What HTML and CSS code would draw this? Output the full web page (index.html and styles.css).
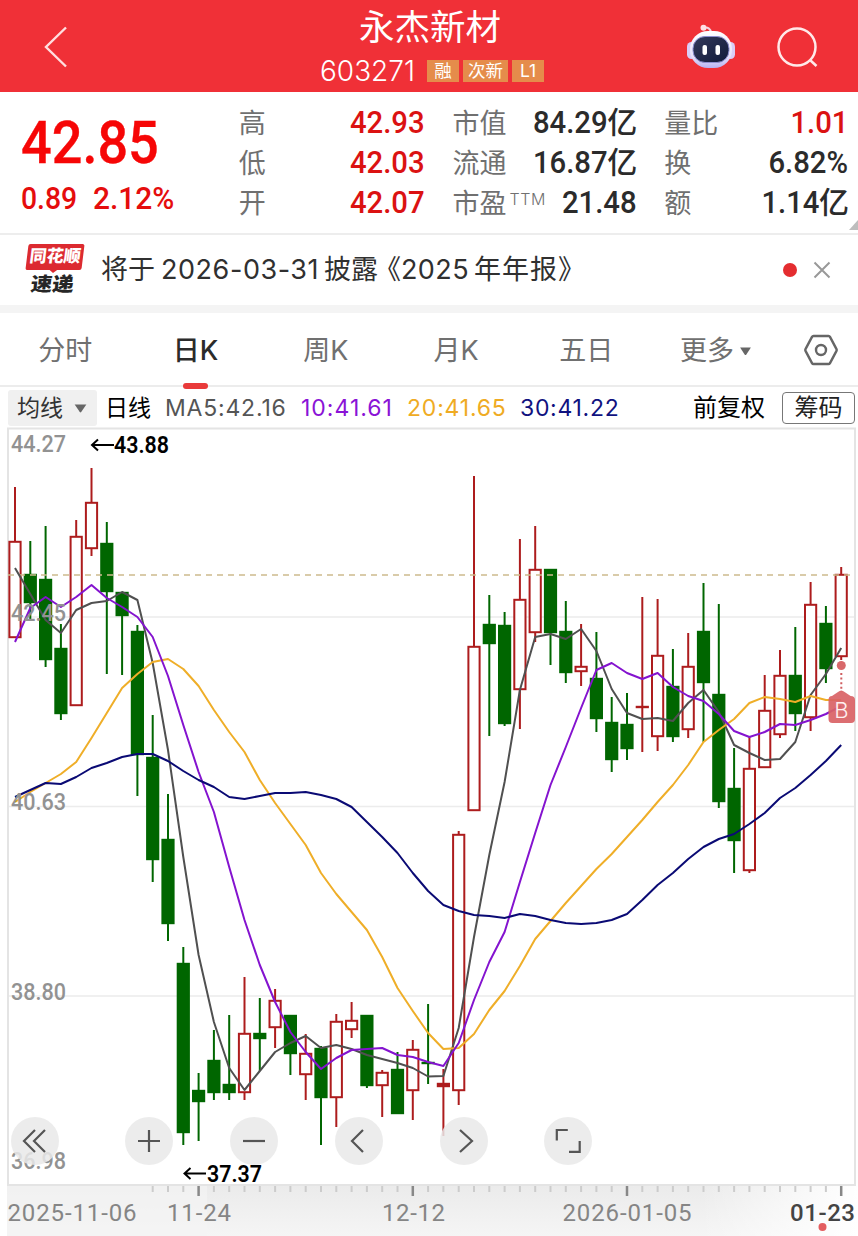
FILE: index.html
```html
<!DOCTYPE html>
<html lang="zh-CN">
<head>
<meta charset="utf-8">
<title>永杰新材 603271</title>
<link rel="stylesheet" href="styles.css">
</head>
<body>
<header class="top">
  <svg class="back" viewBox="0 0 24 42"><path d="M22 1.5 2 21l20 19.5"/></svg>
  <div class="title">
    <h1>永杰新材</h1>
    <div class="code-row"><span class="code">603271</span><span class="tag t1">融</span><span class="tag t2">次新</span><span class="tag t3">L1</span></div>
  </div>
  <svg class="robot" viewBox="0 0 50 46">
    <defs>
      <linearGradient id="shell" x1="0" y1="0" x2="0" y2="1"><stop offset="0" stop-color="#fff"/><stop offset=".7" stop-color="#e6e0fa"/><stop offset="1" stop-color="#b6b2f2"/></linearGradient>
      <linearGradient id="face" x1="0" y1="0" x2="1" y2="1"><stop offset="0" stop-color="#34395a"/><stop offset="1" stop-color="#101a3a"/></linearGradient>
    </defs>
    <path d="M25 9c0-4-3-6-7-5.300" fill="none" stroke="#f3d5e4" stroke-width="2"/>
    <circle cx="17.500" cy="3.800" r="3" fill="#ffe0e6"/>
    <rect x="1" y="18" width="9" height="17" rx="4.500" fill="#d9cdf7"/>
    <rect x="40" y="18" width="9" height="17" rx="4.500" fill="#d9cdf7"/>
    <rect x="4" y="7" width="42" height="37" rx="18" fill="url(#shell)"/>
    <rect x="7" y="12.500" width="36" height="26" rx="12" fill="url(#face)" stroke="#8d8fd0" stroke-width="1"/>
    <rect x="16.500" y="21" width="4.500" height="10" rx="2" fill="#fff"/>
    <rect x="29.500" y="21" width="4.500" height="10" rx="2" fill="#fff"/>
  </svg>
  <svg class="search" viewBox="0 0 42 42"><circle cx="20" cy="20" r="18.500"/><path d="m33 33 6.500 6"/></svg>
</header>

<section class="quote">
  <div class="price">
    <div class="last din">42.85</div>
    <div class="change"><span class="din">0.89</span><span class="din pct">2.12%</span></div>
  </div>
  <dl class="stats c1">
    <dt>高</dt><dd class="up"><span class="din">42.93</span></dd>
    <dt>低</dt><dd class="up"><span class="din">42.03</span></dd>
    <dt>开</dt><dd class="up"><span class="din">42.07</span></dd>
  </dl>
  <dl class="stats c2">
    <dt>市值</dt><dd><span class="din">84.29</span><b>亿</b></dd>
    <dt>流通</dt><dd><span class="din">16.87</span><b>亿</b></dd>
    <dt>市盈<sup>TTM</sup></dt><dd><span class="din">21.48</span></dd>
  </dl>
  <dl class="stats c3">
    <dt>量比</dt><dd class="up"><span class="din">1.01</span></dd>
    <dt>换</dt><dd><span class="din">6.82%</span></dd>
    <dt>额</dt><dd><span class="din">1.14</span><b>亿</b></dd>
  </dl>
  <i class="corner"></i>
</section>

<section class="news">
  <div class="brand"><div class="brand-top"><span>同花顺</span></div><div class="brand-bottom">速递</div></div>
  <p>将于<span class="n1">2026-03-31</span>披露<span class="quote-open">《</span><span class="n2">2025</span><span class="n3">年年报》</span></p>
  <i class="dot"></i>
  <svg class="close" viewBox="0 0 18 18"><path d="m1.500 1.500 15 15m0-15-15 15"/></svg>
</section>

<nav class="tabs">
  <span>分时</span><span class="on">日K</span><span>周K</span><span>月K</span><span>五日</span>
  <span class="more">更多<svg viewBox="0 0 14 10"><path d="M1 .5h12L7.800 8.500q-.8 1-1.600 0z"/></svg></span>
  <svg class="gear" viewBox="0 0 36 32"><path d="M10.500 2h15q1 0 1.500.9l6.500 12.200q.5.900 0 1.800L27 29.100q-.5.900-1.500.9h-15q-1 0-1.500-.9L2.500 16.900q-.5-.9 0-1.800L9 2.900q.5-.9 1.500-.9z"/><circle cx="18" cy="16" r="5"/></svg>
</nav>

<div class="legend">
  <span class="pick">均线<svg viewBox="0 0 14 10"><path d="M.5.500h13L7.800 9q-.8 1-1.600 0z"/></svg></span>
  <span class="period">日线</span>
  <span class="ma ma5">MA5:42.16</span>
  <span class="ma ma10">10:41.61</span>
  <span class="ma ma20">20:41.65</span>
  <span class="ma ma30">30:41.22</span>
  <span class="adjust">前复权</span>
  <span class="chips">筹码</span>
</div>

<main class="chart">
  <svg class="plot" id="plot" viewBox="0 427 858 809">
    <defs>
      <linearGradient id="axis" x1="0" y1="0" x2="0" y2="1"><stop offset="0" stop-color="#ebebeb"/><stop offset="1" stop-color="#f5f5f5"/></linearGradient>
      <linearGradient id="fade"><stop offset="0" stop-color="#fff" stop-opacity="0"/><stop offset="1" stop-color="#fff"/></linearGradient>
    </defs>
    <rect x="7" y="1186" width="851" height="50" fill="url(#axis)"/>
    <rect x="7" y="1186" width="200" height="50" fill="#f4f4f4" opacity=".7"/>
    <rect x="700" y="1186" width="158" height="50" fill="url(#fade)"/>
    <path class="grid" d="M8 617H855M8 806.500H855M8 996H855"/>
    <path class="frame" d="M8 1185V428.500H855V1185z"/>
    <g id="candles"></g>
    <path class="last-line" d="M8 575H855"/>
    <g id="lines"></g>
    <g class="scale">
      <text x="11" y="451.500" textLength="55" lengthAdjust="spacingAndGlyphs">44.27</text>
      <text x="11" y="620.500" textLength="55" lengthAdjust="spacingAndGlyphs">42.45</text>
      <text x="11" y="810" textLength="55" lengthAdjust="spacingAndGlyphs">40.63</text>
      <text x="11" y="999.500" textLength="55" lengthAdjust="spacingAndGlyphs">38.80</text>
      <text x="11" y="1169" textLength="55" lengthAdjust="spacingAndGlyphs">36.98</text>
    </g>
    <path class="arrow" d="M114 445H92m6-5.500L92 445l6 5.500M206 1173.500H184.500m6-5.500-6 5.500 6 5.500"/>
    <g class="extreme">
      <text x="114" y="453" textLength="55" lengthAdjust="spacingAndGlyphs">43.88</text>
      <text x="207" y="1182" textLength="55" lengthAdjust="spacingAndGlyphs">37.37</text>
    </g>
    <g id="ticks"></g>
    <g class="dates">
      <text x="7.500" y="1221" textLength="129">2025-11-06</text>
      <text x="167" y="1221" textLength="64">11-24</text>
      <text x="382" y="1221" textLength="63">12-12</text>
      <text x="562.500" y="1221" textLength="129">2026-01-05</text>
      <text class="now" x="790" y="1221" textLength="65">01-23</text>
    </g>
    <circle cx="822.500" cy="1227" r="4" fill="#e35d5f"/>
    <circle cx="841.300" cy="665.500" r="4.500" fill="#d8686a"/>
    <path d="M841.300 673v19" stroke="#cf5d60" stroke-width="2" stroke-dasharray="2 2.600"/>
    <path d="M832 696l6-4q3.300-3 6.600 0l6 4q4.400 0 4.400 4v19q0 4-4 4h-18.500q-4 0-4-4v-19q0-4 3.500-4z" fill="#d96366" opacity=".93"/>
    <text class="buy" x="841.500" y="718">B</text>
  </svg>
  <div class="controls">
    <button><svg viewBox="0 0 48 48"><path d="M24 13 13 24l11 11M34 13 23 24l11 11"/></svg></button>
    <button><svg viewBox="0 0 48 48"><path d="M13 24h22M24 13v22"/></svg></button>
    <button><svg viewBox="0 0 48 48"><path d="M13 24h22"/></svg></button>
    <button><svg viewBox="0 0 48 48"><path d="M28 13 17 24l11 11"/></svg></button>
    <button><svg viewBox="0 0 48 48"><path d="m20 13 12 11-12 11"/></svg></button>
    <button><svg viewBox="0 0 48 48"><path d="M12.800 23.500V13h11M25 34.800h10.700V24"/></svg></button>
  </div>
</main>
<script src="chart.js"></script>
</body>
</html>
```
FILE: styles.css
```css
* { box-sizing: border-box; margin: 0; padding: 0; }
body {
  width: 858px; height: 1236px; overflow: hidden; background: #fff; color: #2e2e2e;
  font-family: Inter, "Noto Sans CJK SC", sans-serif;
}
svg { display: block; fill: none; }
i { font-style: normal; }
.din { font-family: Roboto, "Liberation Sans", sans-serif; display: inline-block; }

.top {
  height: 92px; background: #f03037; color: #fff; display: grid;
  grid-template-columns: 44px 24px 252px 224px 142px 50px 41px 42px;
}
.back { grid-column: 2; width: 24px; height: 42px; margin-top: 26px; stroke: #ffdfe0; stroke-width: 2.400; }
.title { grid-column: 4; padding-top: 1px; }
.title h1 { font-weight: 400; font-size: 35.500px; line-height: 54px; padding-left: 39px; white-space: nowrap; }
.code-row { display: flex; align-items: center; height: 24px; margin-top: 4px; }
.code { font-size: 28px; font-weight: 300; width: 107px; letter-spacing: 0; line-height: 22px; }
.tag { height: 22px; line-height: 21px; background: #e58c4b; font-size: 17.500px; text-align: center; white-space: nowrap; }
.t1 { width: 32px; margin-right: 4px; }
.t2 { width: 45px; margin-right: 4px; }
.t3 { width: 32px; }
.robot { grid-column: 6; width: 50px; height: 46px; margin-top: 24px; }
.search { grid-column: 8; width: 42px; height: 42px; margin-top: 27px; stroke: #ffe9e9; stroke-width: 2.500; }

.quote { height: 143px; display: flex; position: relative; border-bottom: 2px solid #ededed; padding: 11px 10px 0 21px; }
.price { width: 218px; color: #f60606; }
.last { font-size: 60px; font-weight: 500; line-height: 76px; height: 76px; padding-top: 2px; transform: scaleX(.9); transform-origin: 0 0; -webkit-text-stroke: .4px; }
.change { display: flex; gap: 12px; font-size: 30.500px; font-weight: 500; line-height: 40px; color: #e50d0d; }
.change .din { transform: scaleX(.93); transform-origin: 0 0; }
.change .pct { transform: scaleX(.98); }
.stats { display: grid; grid-template-columns: max-content minmax(0, 1fr); grid-auto-rows: 40px; line-height: 40px; font-size: 27px; }
.c1 { width: 186px; margin-right: 28px; }
.c2 { width: 184px; margin-right: 28px; }
.c3 { width: 184px; }
dt { color: #707070; font-weight: 400; white-space: nowrap; padding-top: 1px; }
dt sup { font-size: 16px; font-weight: 300; line-height: 0; vertical-align: 8px; margin-left: 3px; letter-spacing: .6px; }
dd { color: #2b2b2b; white-space: nowrap; display: flex; justify-content: flex-end; line-height: 38px; }
dd .din { font-size: 32px; font-weight: 500; transform: scaleX(.915); transform-origin: 100% 0; }
dd b { font-size: 30px; font-weight: 500; margin-right: -1px; }
dd.up { color: #db1212; }
.corner { position: absolute; right: 0; bottom: 3px; border: solid transparent; border-width: 0 0 10px 9px; border-bottom-color: #bdbdbd; }

.news { height: 78px; border-bottom: 8px solid #f4f4f4; display: flex; align-items: center; padding-left: 25px; font-size: 27px; }
.brand { width: 60px; height: 52px; margin-right: 16px; }
.brand-top { position: relative; width: 56px; height: 26px; margin-left: 2px; background: #dc2a30; transform: skewX(-7deg); border-radius: 2px; color: #fff; font-weight: 900; font-size: 17px; line-height: 25px; text-align: center; white-space: nowrap; }
.brand-top::after { content: ""; position: absolute; left: 23px; top: 25px; border: solid transparent; border-width: 4px 5px 0; border-top-color: #dc2a30; }
.brand-bottom { font-weight: 900; font-size: 21.500px; line-height: 28px; padding-left: 6px; transform: skewX(-7deg) scaleY(.9); color: #262626; white-space: nowrap; }
.news p { color: #303030; white-space: nowrap; width: 682px; display: flex; line-height: 42px; }
.n1 { margin-left: 6px; width: 163px; letter-spacing: .55px; }
.n2 { width: 73px; letter-spacing: .4px; }
.n3 { letter-spacing: 1px; }
.quote-open { margin-left: -4px; }
.dot { width: 14px; height: 14px; border-radius: 50%; background: #e42d30; margin-right: 16px; }
.close { width: 18px; height: 18px; stroke: #999; stroke-width: 2; }

.tabs { height: 74px; border-bottom: 2px solid #ececec; display: grid; grid-template-columns: repeat(5, 130.300px) 131px 1fr; line-height: 76px; text-align: center; font-size: 27px; font-weight: 400; color: #707070; }
.tabs span { position: relative; white-space: nowrap; }
.tabs .on { font-weight: 500; color: #2b2b2b; }
.tabs .on::after { content: ""; position: absolute; left: 53px; bottom: 0; width: 25px; height: 6px; border-radius: 3px; background: #e93a3a; }
.more { display: flex; justify-content: center; align-items: center; gap: 5px; padding-right: 2px; }
.more svg, .pick svg { width: 13px; height: 9px; fill: #666; }
.gear { width: 36px; height: 32px; margin: 21px 0 0 21px; stroke: #666; stroke-width: 2.400; }

.legend { height: 40px; display: flex; align-items: center; font-size: 23px; color: #000; line-height: 36px; white-space: nowrap; padding: 2px 3px 0 8px; }
.pick { width: 89px; height: 36px; background: #f0f0f0; color: #333; padding-left: 9px; display: flex; align-items: center; gap: 11px; border-radius: 3px; }
.period { margin-left: 8px; width: 60px; }
.ma { font-size: 23px; }
.ma5 { width: 136px; color: #555; letter-spacing: .8px; }
.ma10 { width: 106px; color: #8a13d6; letter-spacing: 1px; }
.ma20 { width: 113px; color: #efab23; letter-spacing: .8px; }
.ma30 { width: 173px; color: #10127f; letter-spacing: .7px; }
.adjust { width: 89px; font-size: 24px; }
.chips { width: 73px; height: 32px; border: 1.500px solid #777; border-radius: 4px; line-height: 29px; text-align: center; color: #222; font-size: 24px; }

.chart { position: relative; height: 809px; }
.plot { width: 858px; height: 809px; }
.grid { stroke: #ececec; stroke-width: 1.500; }
.frame { stroke: #e4e4e4; stroke-width: 2; }
.last-line { stroke: #cdbb8d; stroke-width: 1.400; stroke-dasharray: 6 5; }
.up-bar { stroke: #ad1c1d; stroke-width: 2; fill: #fff; }
.down-bar { stroke: #006600; stroke-width: 2; fill: #006600; }
.line { stroke-width: 2; stroke-linejoin: round; }
.plot text { font-family: Roboto, sans-serif; font-size: 24px; }
.scale text { fill: #929292; font-weight: 500; }
.extreme text { fill: #000; font-weight: 600; }
.arrow { stroke: #000; stroke-width: 2; }
.dates text { fill: #858585; font-size: 24px; font-weight: 450; }
.dates .now { fill: #444; font-weight: 500; }
.tick { stroke: #ccc; stroke-width: 2; }
.tick-major { stroke: #888; stroke-width: 2.500; }
.plot .buy { fill: #fff0f0; text-anchor: middle; font-family: Inter, sans-serif; font-size: 22px; font-weight: 300; }
.controls { position: absolute; left: 10.500px; top: 690px; display: grid; grid-template-columns: 114.500px 105px 105px 104.500px 104.500px 48px; }
.controls button { width: 48px; height: 48px; border: 0; border-radius: 50%; background: rgba(233, 233, 233, .85); }
.controls svg { width: 48px; height: 48px; stroke: #555; stroke-width: 2.200; }
```
FILE: chart.js
```js
// Vertical positions per trading day: direction, high, body top, body bottom, low
const days = [
  ['u',487,541,638,638],['d',541,574,603,620],['d',526,579,660,667],['d',624,648,714,720],
  ['u',520,536,706,706],['u',468,502,549,556],['d',522,543,592,674],['d',592,592,616,675],
  ['d',625,631,755,796],['d',715,757,860,882],['d',794,839,924,941],['d',947,963,1133,1145],
  ['d',1073,1090,1102,1141],['d',1030,1060,1093,1100],['d',1015,1084,1093,1100],['u',977,1033,1093,1100],
  ['d',998,1033,1039,1071],['u',989,1000,1028,1048],['d',1015,1015,1054,1075],['u',1034,1053,1075,1100],
  ['d',1046,1048,1098,1145],['u',1014,1021,1098,1127],['u',1002,1020,1030,1038],['d',1015,1015,1086,1088],
  ['u',1070,1072,1086,1117],['d',1052,1069,1114,1114],['u',1040,1049,1091,1120],['d',1004,1062,1064,1084],
  ['x',1069,1083,1087,1136],['u',831,834,1091,1105],['u',476,646,811,811],['d',595,624,644,736],
  ['d',612,625,724,726],['u',539,599,690,729],['u',526,569,633,642],['d',569,569,633,665],
  ['d',601,631,673,683],['u',624,666,672,686],['d',632,678,719,732],['d',697,722,760,772],
  ['d',693,724,749,760],['x',597,706,708,752],['u',599,655,737,751],['d',649,686,737,742],
  ['u',633,666,730,738],['d',583,631,683,742],['d',604,694,802,808],['d',748,788,841,873],
  ['u',737,768,871,873],['u',675,710,768,768],['u',650,675,735,738],['d',627,675,714,731],
  ['u',582,604,718,731],['d',606,623,669,683],['u',567,574,657,660]
];

const averages = {
  '#505050': [568,594,620,633,610,603,601,592,600,663,750,857,955,1022,1068,1090,1071,1052,1043,1036,1048,1045,1049,1055,1059,1063,1068,1076.5,1076,1028,937,855,782,690,637,634,639,629,651,689,713,719,718,721,703,690,712,745,753,760,759,742,695,674,648],
  '#efae28': [802,792,783,774,762,738,713,688,674,662,659,669,686,710,732,752,780,803,824,845,873,894,912,930,957,988,1011,1033,1049,1048,1034,1010,991,966,939,921,903,886,869,854,837,820,802,785,765,742,730,719,703,697,699,702,696,700,700],
  '#8413cf': [642,608,597,607,597,585,598,607,617,637,676,725,772,812,867,920,965,1002,1032,1052,1069,1058,1050,1049,1048,1055,1057,1062,1066,1043,1000,962,932,882,833,785,747,708,670,663,673,679,673,687,696,701,714,731,737,732,724,725,720,714,706],
  '#0a0a74': [797,790,783,784,777,768,763,757,754,754,761,771,780,787,797,799,796,793,793,792,795,799,807,822,837,853,873,891,905,911,915,916,918,914,916,920,923,924,923,920,914,900,885,873,859,847,839,834,824,813,798,788,775,761,745]
};

const x = i => 15 + i * 15.3;
const candles = days.map(([dir, high, top, bottom, low], i) => {
  const c = x(i).toFixed(1);
  const cls = dir === 'd' ? 'down-bar' : 'up-bar';
  const fill = dir === 'x' ? ' style="fill:#ad1c1d"' : '';
  const y = top + 0.8;
  const h = Math.max(0.4, bottom - top - 1.6);
  return `<g class="${cls}"><path d="M${c} ${high}V${low}"/><rect x="${(c - 5.6).toFixed(1)}" y="${y}" width="11.2" height="${h}"${fill}/></g>`;
});
document.getElementById('candles').innerHTML = candles.join('');

document.getElementById('lines').innerHTML = Object.entries(averages).map(([color, ys]) =>
  `<polyline class="line" stroke="${color}" points="${ys.map((y, i) => x(i).toFixed(1) + ',' + y).join(' ')}"/>`
).join('');

const major = [12, 26, 40, 54];
let ticks = '';
for (let i = 9; i < days.length; i++) {
  const isMajor = major.includes(i);
  ticks += `<path class="${isMajor ? 'tick-major' : 'tick'}" d="M${x(i).toFixed(1)} 1186v${isMajor ? 10 : 6}"/>`;
}
document.getElementById('ticks').innerHTML = ticks;
```
